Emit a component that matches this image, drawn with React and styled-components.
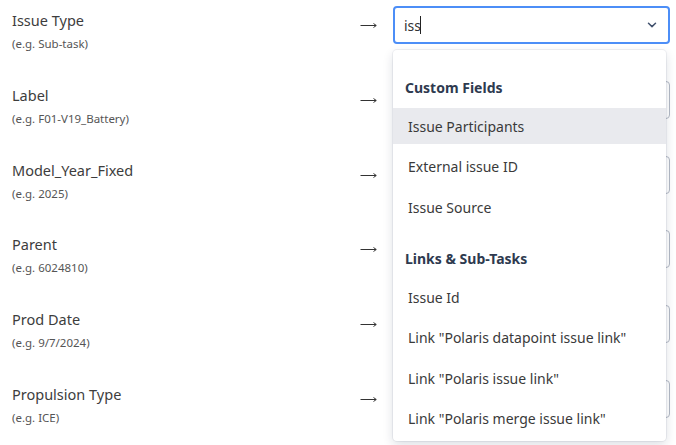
import styled, { createGlobalStyle } from 'styled-components';

const fields = [
  { label: 'Issue Type', hint: '(e.g. Sub-task)', value: 'iss', focused: true },
  { label: 'Label', hint: '(e.g. F01-V19_Battery)' },
  { label: 'Model_Year_Fixed', hint: '(e.g. 2025)' },
  { label: 'Parent', hint: '(e.g. 6024810)' },
  { label: 'Prod Date', hint: '(e.g. 9/7/2024)' },
  { label: 'Propulsion Type', hint: '(e.g. ICE)' },
];

const groups = [
  {
    title: 'Custom Fields',
    top: 28,
    options: ['Issue Participants', 'External issue ID', 'Issue Source'],
  },
  {
    title: 'Links & Sub-Tasks',
    top: 24,
    options: [
      'Issue Id',
      'Link "Polaris datapoint issue link"',
      'Link "Polaris issue link"',
      'Link "Polaris merge issue link"',
    ],
  },
];

const GlobalStyle = createGlobalStyle`
  html, body {
    margin: 0;
    padding: 0;
    background: #ffffff;
  }
  body {
    font-family: 'Noto Sans', 'Open Sans', sans-serif;
    color: #333333;
  }
`;

// 화살표 아이콘
const ArrowIcon = () => (
  <svg width="17" height="8" viewBox="0 0 17 8">
    <path d="M0.5 4.5 H16" stroke="#333" strokeWidth="1" />
    <path d="M13.5 2.5 L16.3 4.5 L13.5 6.5" fill="none" stroke="#333" strokeWidth="1" />
  </svg>
);

const App = () => {
  return (
    <>
      <GlobalStyle />
      <MappingList>
        {fields.map((field) => (
          <Row key={field.label}>
            <LabelCell>
              <FieldName>{field.label}</FieldName>
              <FieldHint>{field.hint}</FieldHint>
            </LabelCell>
            <Arrow>
              <ArrowIcon />
            </Arrow>
            <SelectBox $focused={field.focused}>
              {field.focused && (
                <>
                  <TypedValue>
                    {field.value}
                    <Caret />
                  </TypedValue>
                  <Chevron viewBox="0 0 10 6">
                    <path
                      d="M1.5 1.2 L5 4.6 L8.5 1.2"
                      fill="none"
                      stroke="#42526e"
                      strokeWidth="1.5"
                      strokeLinecap="round"
                      strokeLinejoin="round"
                    />
                  </Chevron>
                </>
              )}
            </SelectBox>
          </Row>
        ))}

        <Menu>
          {groups.map((group) => (
            <Group key={group.title} $top={group.top}>
              <GroupTitle>{group.title}</GroupTitle>
              <OptionList>
                {group.options.map((option, i) => (
                  <Option key={option} $active={group.top === 28 && i === 0}>
                    {option}
                  </Option>
                ))}
              </OptionList>
            </Group>
          ))}
        </Menu>
      </MappingList>
    </>
  );
};

export default App;

const MappingList = styled.main`
  position: relative;
  width: 676px;
  height: 445px;
  overflow: hidden;
  padding: 0 6px 0 12px;
  box-sizing: border-box;
`;

const Row = styled.div`
  display: grid;
  grid-template-columns: 1fr 44px 277px;
  align-items: start;
  height: 74.8px;
`;

const LabelCell = styled.div`
  display: flex;
  flex-direction: column;
  gap: 7px;
  padding-top: 10px;
`;

const FieldName = styled.div`
  font-size: 14.5px;
  line-height: 20px;
  color: #3d3d3d;
`;

const FieldHint = styled.div`
  font-size: 11.5px;
  line-height: 14px;
  color: #555555;
`;

const Arrow = styled.div`
  margin-top: 6px;
  height: 38px;
  display: flex;
  align-items: center;
  justify-content: flex-start;
  padding-left: 11px;
  box-sizing: border-box;
`;

const SelectBox = styled.div`
  margin-top: 6px;
  height: 38px;
  box-sizing: border-box;
  border-radius: 4px;
  border: ${({ $focused }) => ($focused ? '2px solid #4c8ef7' : '1px solid #b3b9c4')};
  background: #ffffff;
  display: flex;
  align-items: center;
  justify-content: space-between;
  padding: 0 11px 0 9px;
`;

const TypedValue = styled.span`
  font-size: 14px;
  color: #333333;
  display: inline-flex;
  align-items: center;
`;

const Caret = styled.span`
  display: inline-block;
  width: 1px;
  height: 18px;
  margin-left: -1px;
  background: #222222;
`;

const Chevron = styled.svg`
  width: 10px;
  height: 6px;
`;

const Menu = styled.div`
  position: absolute;
  left: 393px;
  top: 50px;
  width: 273px;
  height: 391px;
  background: #ffffff;
  border-radius: 4px;
  box-shadow: 0 0 0 1px rgba(9, 30, 66, 0.06), 0 4px 11px rgba(9, 30, 66, 0.14);
  overflow: hidden;
`;

const Group = styled.section`
  padding-top: ${({ $top }) => $top}px;
`;

const GroupTitle = styled.h4`
  margin: 0 0 10px;
  padding-left: 12px;
  font-size: 14px;
  line-height: 20px;
  font-weight: 700;
  color: #2e3a4f;
`;

const OptionList = styled.ul`
  list-style: none;
  margin: 0;
  padding: 0;
  display: flex;
  flex-direction: column;
  gap: 4.5px;
`;

const Option = styled.li`
  height: 36px;
  display: flex;
  align-items: center;
  padding-left: 15px;
  font-size: 14px;
  color: #3a3a3a;
  white-space: nowrap;
  background: ${({ $active }) => ($active ? '#e9eaee' : 'transparent')};
`;
